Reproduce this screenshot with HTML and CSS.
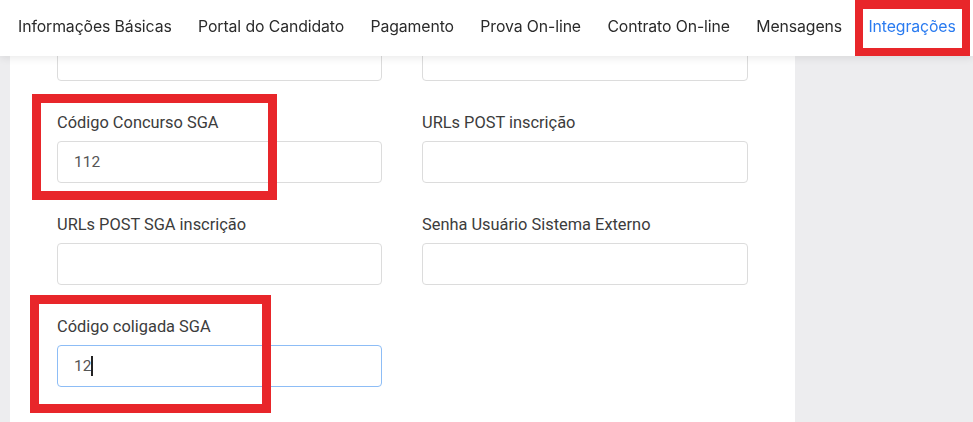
FILE: index.html
```html
<!DOCTYPE html>
<html lang="pt-BR">
<head>
<meta charset="utf-8">
<title>Integrações</title>
<link rel="stylesheet" href="styles.css">
</head>
<body>
<nav class="tabs">
  <a class="tab">Informações Básicas</a>
  <a class="tab">Portal do Candidato</a>
  <a class="tab">Pagamento</a>
  <a class="tab">Prova On-line</a>
  <a class="tab">Contrato On-line</a>
  <a class="tab">Mensagens</a>
  <a class="tab tab-active">Integrações</a>
</nav>
<div class="mark mark-tab"></div>

<div class="page">
  <main class="card">
    <div class="grid">
      <div class="field">
        <div class="input"></div>
      </div>
      <div class="field">
        <div class="input"></div>
      </div>
      <div class="field">
        <label class="label">Código Concurso SGA</label>
        <div class="input">112</div>
      </div>
      <div class="field">
        <label class="label">URLs POST inscrição</label>
        <div class="input"></div>
      </div>
      <div class="field">
        <label class="label">URLs POST SGA inscrição</label>
        <div class="input"></div>
      </div>
      <div class="field">
        <label class="label">Senha Usuário Sistema Externo</label>
        <div class="input"></div>
      </div>
      <div class="field">
        <label class="label">Código coligada SGA</label>
        <div class="input input-focus">12<span class="caret"></span></div>
      </div>
    </div>
  </main>
  <aside class="side"></aside>
</div>

<div class="mark mark-one"></div>
<div class="mark mark-two"></div>
</body>
</html>
```

FILE: styles.css
```css
* { box-sizing: border-box; }
html, body { margin: 0; padding: 0; }
body {
  background: #ededef;
  font-family: Roboto, "Liberation Sans", sans-serif;
  color: #333;
  height: 422px;
  overflow: hidden;
}
.tabs {
  position: fixed;
  top: 0; left: 0; right: 0;
  height: 56px;
  background: #fff;
  display: flex;
  align-items: center;
  gap: 26.4px;
  padding: 0 0 3px 18px;
  box-shadow: 0 2px 8px rgba(0,0,0,0.09);
  z-index: 5;
  font-family: Inter, "Noto Sans", sans-serif;
  font-size: 15.8px;
  letter-spacing: -0.1px;
}
.tab { color: #2b2b2b; white-space: nowrap; }
.tab-active { color: #2a7bf0; }

.page {
  display: flex;
  padding-left: 10px;
  min-height: 422px;
}
.card {
  width: 785px;
  background: #fff;
  padding: 39px 47px 0 47px;
}
.side { flex: 1; }

.grid {
  display: grid;
  grid-template-columns: 325px 326px;
  column-gap: 40px;
}
.field {
  display: flex;
  flex-direction: column;
  padding-bottom: 32px;
}
.label {
  font-size: 16.4px;
  line-height: 20px;
  margin-bottom: 8px;
  color: #3c3c3c;
}
.input {
  height: 42px;
  border: 1px solid #dcdcdc;
  border-radius: 4px;
  background: #fff;
  padding: 0 16px;
  display: flex;
  align-items: center;
  font-size: 15.5px;
  color: #555;
}
.input-focus { border-color: #8dbdf6; }
.caret {
  display: inline-block;
  width: 2px;
  height: 20px;
  background: #222;
}

.mark {
  position: absolute;
  border: 9px solid #e8262a;
  z-index: 10;
}
.mark-tab {
  position: fixed;
  left: 855px; top: 0;
  width: 115px; height: 56px;
  border-width: 9px 8px 8px 8px;
}
.mark-one { left: 32px; top: 94px; width: 245px; height: 106px; }
.mark-two { left: 30px; top: 295px; width: 241px; height: 118px; }
```
